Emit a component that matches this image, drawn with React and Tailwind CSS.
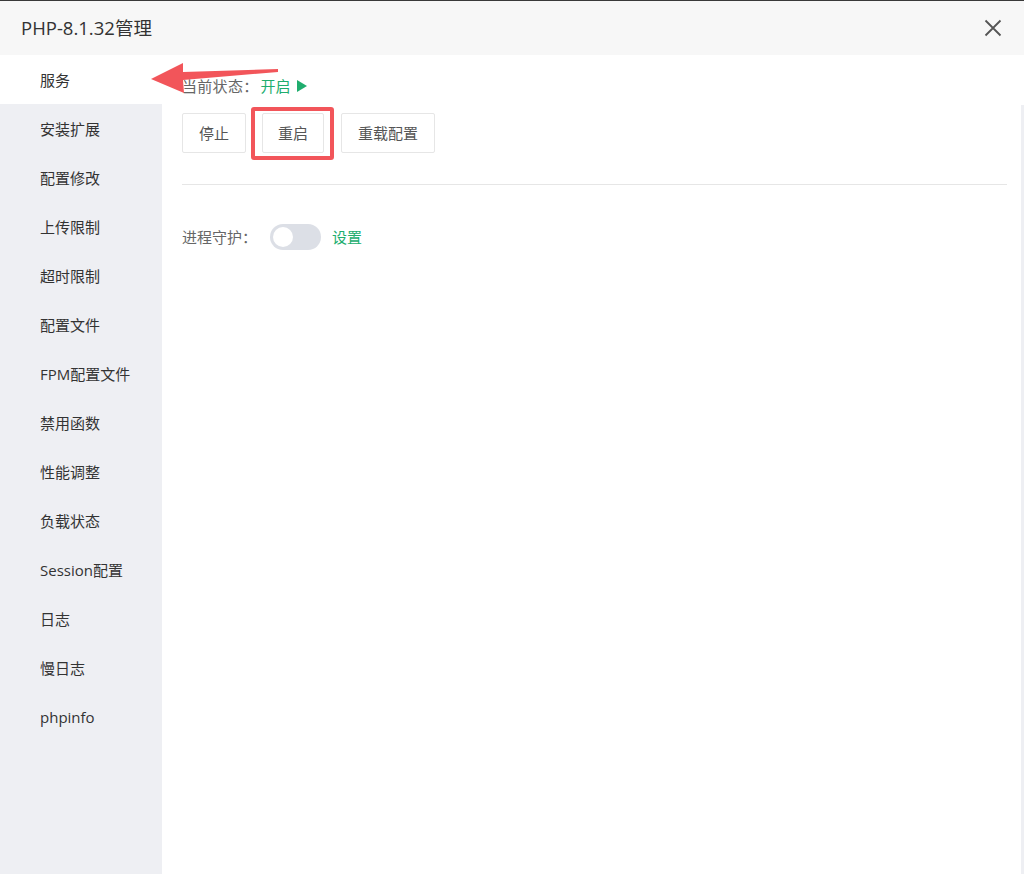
import React, { useState } from "react";

const menu = [
  "服务",
  "安装扩展",
  "配置修改",
  "上传限制",
  "超时限制",
  "配置文件",
  "FPM配置文件",
  "禁用函数",
  "性能调整",
  "负载状态",
  "Session配置",
  "日志",
  "慢日志",
  "phpinfo",
];

const App = () => {
  const [active] = useState(0);
  const [guard, setGuard] = useState(false);

  return (
    <div
      className="relative w-[1024px] h-[874px] bg-white flex flex-col overflow-hidden border-t border-[#3a3a3a]"
      style={{ fontFamily: '"Open Sans", "Noto Sans CJK SC", sans-serif' }}
    >
      {/* 标题栏 */}
      <div className="h-[54px] shrink-0 bg-[#f7f7f7] flex items-center justify-between pl-[21px] pr-[22px]">
        <span className="text-[18.5px] text-[#333]">PHP-8.1.32管理</span>
        <svg width="18" height="18" viewBox="0 0 18 18" className="text-[#555]">
          <path d="M1.5 1.5 L16.5 16.5 M16.5 1.5 L1.5 16.5" stroke="currentColor" strokeWidth="1.8" />
        </svg>
      </div>

      <div className="flex flex-1">
        {/* 左侧菜单 */}
        <div className="w-[162px] bg-[#eeeff3] flex flex-col">
          {menu.map((m, i) => (
            <div
              key={m}
              className={`h-[49px] flex items-center pl-[40px] pt-[2px] text-[15px] text-[#333] ${
                i === active ? "bg-white" : ""
              }`}
            >
              {m}
            </div>
          ))}
        </div>

        {/* 右侧内容 */}
        <div className="flex-1 flex">
          <div className="flex-1 pl-[20px] pr-[14px] pt-[20px]">
            <div className="text-[15px] text-[#666] flex items-center h-[22px]">
              <span className="tracking-[0.3px]">当前状态：</span>
              <span className="ml-[2px] text-[#20ad6e]">开启</span>
              <svg width="10" height="12" viewBox="0 0 10 12" className="ml-[6px]">
                <path d="M0 0 L10 6 L0 12 Z" fill="#20ad6e" />
              </svg>
            </div>

            <div className="flex mt-[16px]">
              <button className="h-[40px] w-[64px] border border-[#e6e6e6] rounded-[2px] text-[15px] text-[#555] bg-white">
                停止
              </button>
              <div className="relative ml-[16px]">
                <button className="h-[40px] w-[62px] border border-[#e6e6e6] rounded-[2px] text-[15px] text-[#555] bg-white">
                  重启
                </button>
                <div className="absolute -left-[11px] -right-[10px] -top-[6px] -bottom-[7px] border-[4px] border-[#f2555a] rounded-[3px]" />
              </div>
              <button className="ml-[17px] h-[40px] w-[94px] border border-[#e6e6e6] rounded-[2px] text-[15px] text-[#555] bg-white">
                重载配置
              </button>
            </div>

            <div className="mt-[31px] h-px bg-[#e6e6e6]" />

            <div className="mt-[39px] flex items-center text-[15px] text-[#666]">
              <span>进程守护：</span>
              <button
                onClick={() => setGuard(!guard)}
                className={`ml-[13px] w-[51px] h-[26px] rounded-full p-[3px] flex ${
                  guard ? "bg-[#20ad6e] justify-end" : "bg-[#dcdfe6] justify-start"
                }`}
              >
                <span className="w-[20px] h-[20px] rounded-full bg-white block" />
              </button>
              <span className="ml-[11px] text-[#20ad6e]">设置</span>
            </div>
          </div>
          <div className="w-[3px] mt-[50px] bg-[#eeeff3]" />
        </div>
      </div>

      {/* 红色箭头标注 */}
      <svg
        className="absolute left-0 top-0 pointer-events-none"
        width="300"
        height="110"
        viewBox="0 0 300 110"
      >
        <path d="M151 78 L183 62 L183 71 L278 68 L278 71 L183 79 L184 92 Z" fill="#f2555a" />
      </svg>
    </div>
  );
};

export default App;
